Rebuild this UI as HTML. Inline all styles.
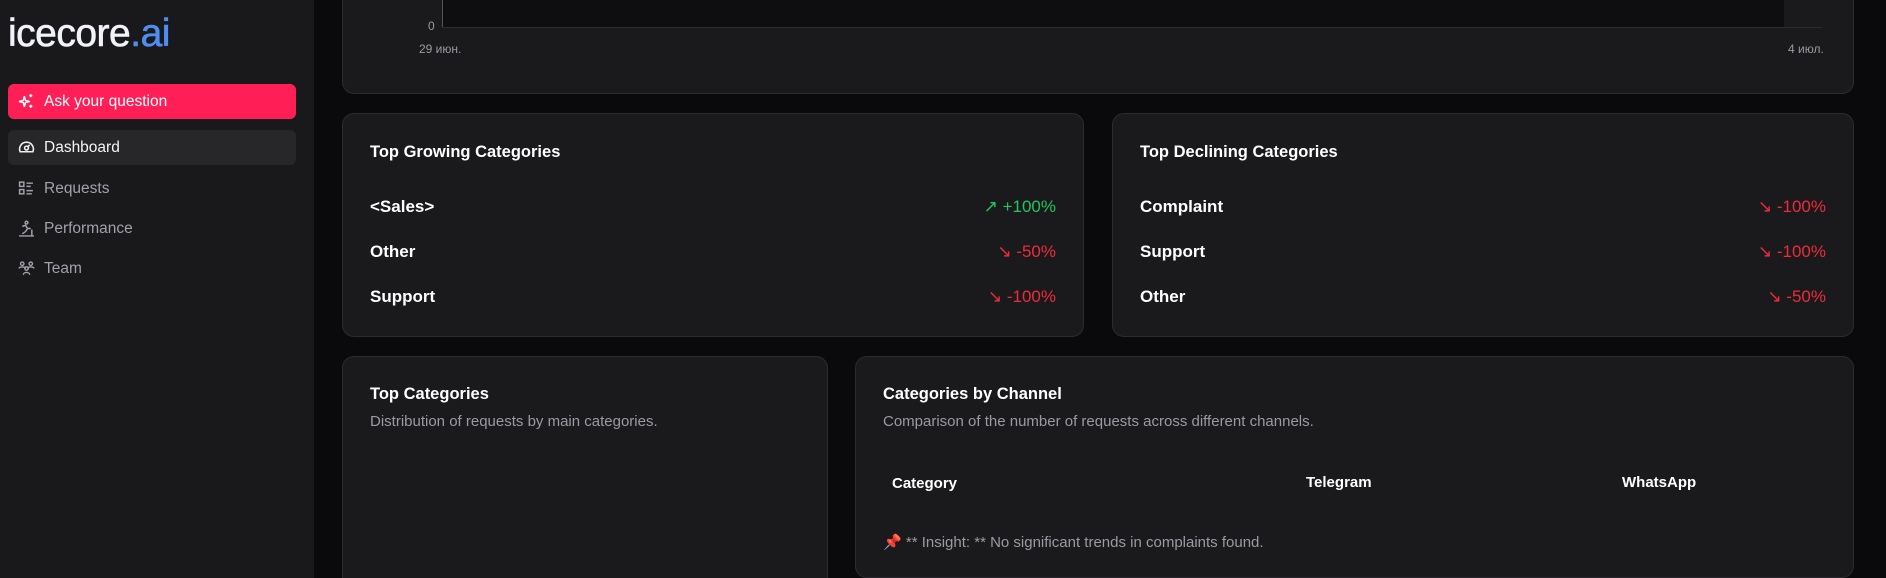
<!DOCTYPE html>
<html><head><meta charset="utf-8"><style>
*{box-sizing:border-box;margin:0;padding:0}
html{width:1886px;height:578px;overflow:hidden}
body{width:1886px;height:578px;overflow:hidden;background:#0a0a0c;font-family:"Liberation Sans",sans-serif;color:#fff;position:relative}
.side{position:absolute;left:0;top:0;width:314px;height:578px;background:#19191c}
.logo{position:absolute;left:8px;top:12px;font-size:39px;color:#f1f3f8;letter-spacing:-0.5px;-webkit-text-stroke:0.6px #f1f3f8}
.logo span{color:#4f8ef0;-webkit-text-stroke:0.6px #4f8ef0}
.btn{position:absolute;left:8px;width:288px;height:35px;border-radius:6px;display:flex;align-items:center;padding-left:36px;font-size:15.5px}
.ico{position:absolute;left:10px;top:9px;width:17px;height:17px}
.card{position:absolute;background:#1a1a1d;border:1px solid #2c2c30;border-radius:12px}
.t{position:absolute;font-weight:bold;font-size:16.5px}
.row{position:absolute;left:27px;right:27px;display:flex;justify-content:space-between;font-size:17px;font-weight:bold}
.g{color:#22c55e;font-weight:normal}.r{color:#ef2b3a;font-weight:normal}
.sub{position:absolute;font-size:15px;color:#9a9aa2}
.th{position:absolute;font-size:15px;font-weight:bold}
</style></head><body>
<div class="side">
<div class="logo">icecore<span>.ai</span></div>
<div class="btn" style="top:84px;background:#ff1f56;color:#fff"><svg class="ico" viewBox="0 0 16 16" fill="none" stroke="#fff" stroke-width="1.4"><path d="M6 3 L7 7 L11 8 L7 9 L6 13 L5 9 L1 8 L5 7Z"/><path d="M12 1v3M10.5 2.5h3M12 11v3M10.5 12.5h3"/></svg>Ask your question</div>
<div class="btn" style="top:130px;background:#27272a;color:#f4f4f5"><svg class="ico" viewBox="0 0 16 16" fill="none" stroke="#eee" stroke-width="1.5"><path d="M2 12A6.5 6.5 0 1 1 14 12Z"/><circle cx="8" cy="8.5" r="1.8"/><path d="M9.3 7.2L11 5.5"/></svg>Dashboard</div>
<div class="btn" style="top:171px;color:#a1a1aa"><svg class="ico" viewBox="0 0 16 16" fill="none" stroke="#a1a1aa" stroke-width="1.4"><rect x="1.5" y="2" width="4" height="4"/><rect x="1.5" y="9" width="4" height="4"/><path d="M8 3h6M8 6h4M8 10h6M8 13h5"/></svg>Requests</div>
<div class="btn" style="top:211px;color:#a1a1aa"><svg class="ico" viewBox="0 0 16 16" fill="none" stroke="#a1a1aa" stroke-width="1.4"><circle cx="8" cy="2.5" r="1.3"/><path d="M4 6l3-1 2 3-2 3M7 11l-3 2M9 8h3M1 15h14M13 9v6"/></svg>Performance</div>
<div class="btn" style="top:251px;color:#a1a1aa"><svg class="ico" viewBox="0 0 16 16" fill="none" stroke="#a1a1aa" stroke-width="1.3"><circle cx="4" cy="3.5" r="1.6"/><circle cx="12" cy="3.5" r="1.6"/><circle cx="8" cy="8" r="1.6"/><path d="M1 8c0-2 6-2 6 0M9 8c0-2 6-2 6 0M5 14c0-3 6-3 6 0"/></svg>Team</div>
</div>

<div class="card" style="left:342px;top:-20px;width:1512px;height:114px;">
<div style="position:absolute;left:99px;top:0;width:1342px;height:46px;background:#0e0e10"></div>
<div style="position:absolute;left:99px;top:0;width:1px;height:47px;background:#555"></div>
<div style="position:absolute;left:99px;top:46px;width:1380px;height:1px;background:#2c2c30"></div>
<div style="position:absolute;left:85px;top:38px;font-size:12px;color:#9a9aa2">0</div>
<div style="position:absolute;left:76px;top:61px;font-size:12px;color:#9a9aa2">29 июн.</div>
<div style="position:absolute;left:1445px;top:61px;font-size:12px;color:#9a9aa2">4 июл.</div>
</div>

<div class="card" style="left:342px;top:113px;width:742px;height:224px;">
<div class="t" style="left:27px;top:29px">Top Growing Categories</div>
<div class="row" style="top:83px"><span>&lt;Sales&gt;</span><span class="g">↗ +100%</span></div>
<div class="row" style="top:128px"><span>Other</span><span class="r">↘ -50%</span></div>
<div class="row" style="top:173px"><span>Support</span><span class="r">↘ -100%</span></div>
</div>
<div class="card" style="left:1112px;top:113px;width:742px;height:224px;">
<div class="t" style="left:27px;top:29px">Top Declining Categories</div>
<div class="row" style="top:83px"><span>Complaint</span><span class="r">↘ -100%</span></div>
<div class="row" style="top:128px"><span>Support</span><span class="r">↘ -100%</span></div>
<div class="row" style="top:173px"><span>Other</span><span class="r">↘ -50%</span></div>
</div>

<div class="card" style="left:342px;top:356px;width:486px;height:235px;">
<div class="t" style="left:27px;top:28px">Top Categories</div>
<div class="sub" style="left:27px;top:56px">Distribution of requests by main categories.</div>
</div>
<div class="card" style="left:855px;top:356px;width:999px;height:222px;">
<div class="t" style="left:27px;top:28px">Categories by Channel</div>
<div class="sub" style="left:27px;top:56px">Comparison of the number of requests across different channels.</div>
<div class="th" style="left:36px;top:118px">Category</div>
<div class="th" style="left:450px;top:117px">Telegram</div>
<div class="th" style="left:766px;top:117px">WhatsApp</div>
<div class="sub" style="left:27px;top:176px"><span style="color:#e11d2e">📌</span> ** Insight: ** No significant trends in complaints found.</div>
</div>
</body></html>
